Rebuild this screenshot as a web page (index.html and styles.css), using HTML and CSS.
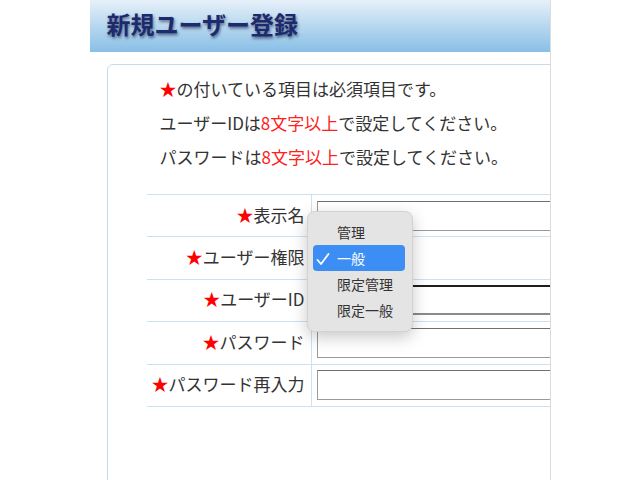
FILE: index.html
```html
<!DOCTYPE html>
<html lang="ja">
<head>
    <meta charset="UTF-8">
    <meta name="viewport" content="width=device-width, initial-scale=1.0">
    <title>新規ユーザー登録</title>
    <link rel="stylesheet" href="styles.css">
</head>
<body>
    <div class="page">
        <header class="page-header">
            <h1>新規ユーザー登録</h1>
        </header>

        <div class="panel">
            <div class="notes">
                <p><span class="req">★</span>の付いている項目は必須項目です。</p>
                <p>ユーザーIDは<span class="em">8文字以上</span>で設定してください。</p>
                <p>パスワードは<span class="em">8文字以上</span>で設定してください。</p>
            </div>

            <table class="form-table">
                <tr>
                    <th><span class="req">★</span>表示名</th>
                    <td><input type="text" class="field"></td>
                </tr>
                <tr>
                    <th><span class="req">★</span>ユーザー権限</th>
                    <td><span class="select-stub"></span></td>
                </tr>
                <tr>
                    <th><span class="req">★</span>ユーザーID</th>
                    <td><input type="text" class="field field-dark"></td>
                </tr>
                <tr>
                    <th><span class="req">★</span>パスワード</th>
                    <td><input type="password" class="field"></td>
                </tr>
                <tr>
                    <th><span class="req">★</span>パスワード再入力</th>
                    <td><input type="password" class="field"></td>
                </tr>
            </table>
        </div>
    </div>

    <!-- open dropdown for ユーザー権限 -->
    <ul class="menu">
        <li>管理</li>
        <li class="selected">
            <svg class="check" width="14" height="14" viewBox="0 0 14 14"><path d="M1.5 8 L5 12 L12.5 2" fill="none" stroke="#fff" stroke-width="1.8" stroke-linecap="round" stroke-linejoin="round"/></svg>
            一般
        </li>
        <li>限定管理</li>
        <li>限定一般</li>
    </ul>
</body>
</html>
```

FILE: styles.css
```css
/* Base */
html, body {
    margin: 0;
    padding: 0;
    background: #fff;
}

body {
    font-family: "Noto Sans CJK JP", "Noto Sans", sans-serif;
    color: #333;
    height: 480px;
    overflow: hidden;
}

.page {
    width: 460px;
    height: 480px;
    margin: 0 auto;
    overflow: hidden;
    border-right: 1px solid #dcdcdc;
}

/* Header band */
.page-header {
    height: 52px;
    padding-left: 17px;
    background: linear-gradient(to bottom, #e6f0f9, #88bfe6);
}

.page-header h1 {
    margin: 0;
    font-size: 24px;
    line-height: 48px;
    font-weight: bold;
    color: #1c2a6e;
    text-shadow: 1px 2px 3px rgba(0, 0, 40, 0.5);
}

/* Panel */
.panel {
    margin: 12px 0 0 17px;
    width: 520px;
    height: 480px;
    padding: 7px 0 0 39px;
    border: 1px solid #c6dde9;
    border-radius: 6px;
    box-sizing: border-box;
}

.notes {
    padding-left: 13px;
    margin-bottom: 20px;
}

.notes p {
    margin: 0;
    font-size: 17px;
    line-height: 34px;
}

.req {
    color: #ff0000;
}

.em {
    color: #ff2020;
}

/* Form table */
.form-table {
    border-collapse: collapse;
    width: 440px;
}

.form-table th,
.form-table td {
    height: 41.4px;
    padding: 0;
    border-top: 1px solid #cfe1ec;
    border-bottom: 1px solid #cfe1ec;
    vertical-align: middle;
}

.form-table th {
    width: 158px;
    height: 39.4px;
    padding-right: 6px;
    padding-bottom: 2px;
    text-align: right;
    font-size: 17px;
    line-height: 24px;
    font-weight: normal;
    white-space: nowrap;
    border-right: 1px solid #cfe1ec;
}

.form-table td {
    padding-left: 5px;
    line-height: 24px;
}

.field {
    display: block;
    width: 260px;
    height: 30px;
    margin: 0;
    padding: 0 4px;
    border: 1px solid #9a9a9a;
    border-top-color: #6f6f6f;
    box-sizing: border-box;
    background: #fff;
}

.field-dark {
    border: 2px solid #8a8a8a;
    border-top-color: #1e1e1e;
    border-left-color: #1e1e1e;
}

.select-stub {
    display: inline-block;
    width: 80px;
    height: 24px;
    vertical-align: middle;
}

/* Dropdown menu */
.menu {
    position: absolute;
    left: 307px;
    top: 211px;
    width: 106px;
    margin: 0;
    padding: 7px 0 8px;
    list-style: none;
    background: #e5e4e4;
    border: 1px solid #d2d2d2;
    border-radius: 8px;
    box-shadow: 0 5px 16px rgba(0, 0, 0, 0.22);
    box-sizing: border-box;
    font-size: 14px;
    color: #333;
}

.menu li {
    position: relative;
    height: 26px;
    line-height: 26px;
    padding-left: 29px;
}

.menu li.selected {
    margin: 0 7px 0 5px;
    padding-left: 24px;
    border-radius: 4px;
    background: #3c8ef4;
    color: #fff;
}

.check {
    position: absolute;
    left: 3px;
    top: 7px;
}
```
